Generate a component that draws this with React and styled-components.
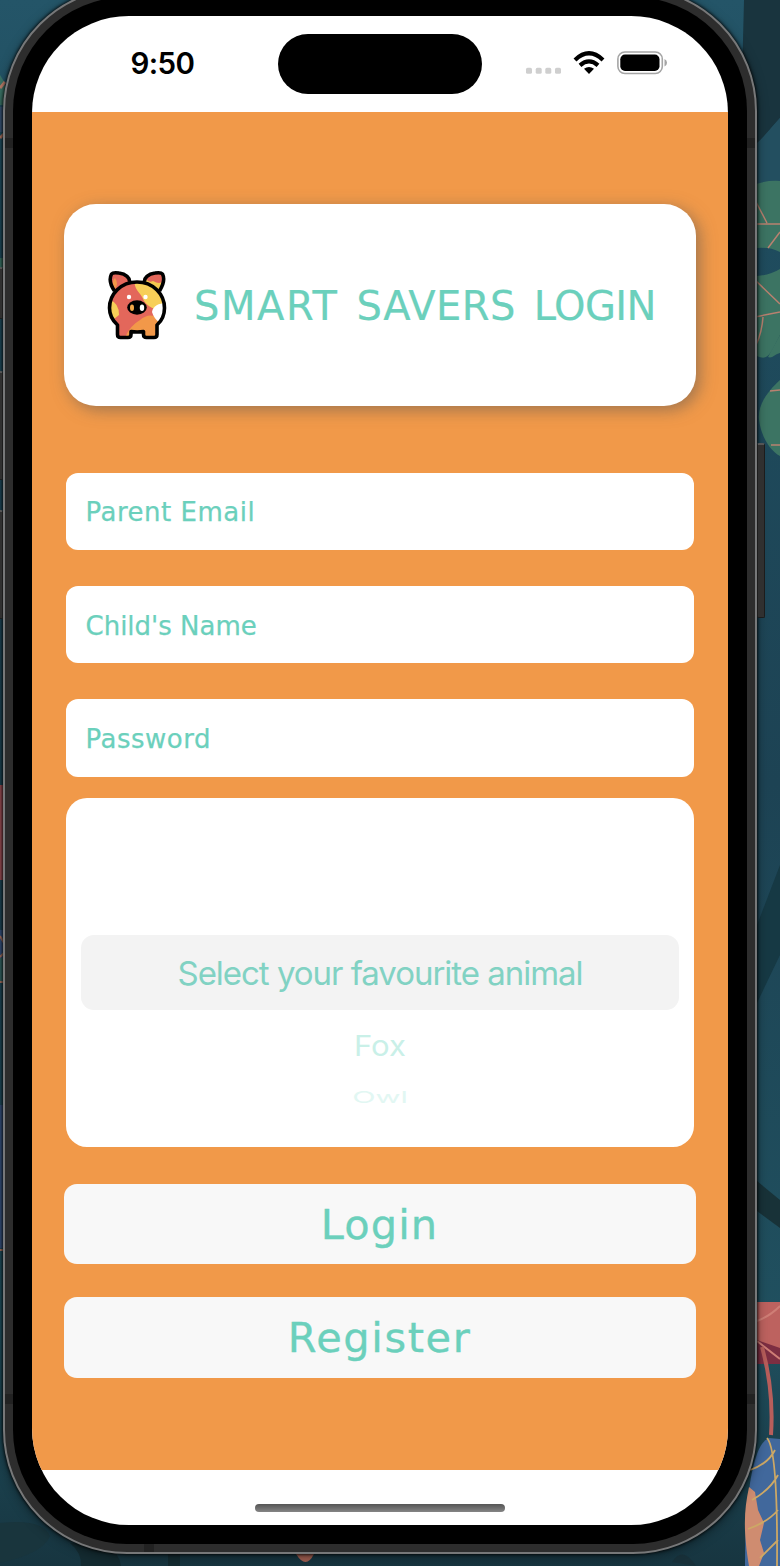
import React from 'react';
import styled, { createGlobalStyle } from 'styled-components';

const ORANGE = '#f19949';
const MINT = '#6bd0bc';

const GlobalStyle = createGlobalStyle`
  * { box-sizing: border-box; }
  html, body { margin: 0; padding: 0; overflow: hidden; background: #1d4555; }
`;

const Desktop = styled.main`
  position: relative;
  width: 780px;
  height: 1566px;
  overflow: hidden;
  display: flex;
  align-items: flex-start;
  background: #1f4757;
`;

const WallpaperArt = styled.svg`
  position: absolute;
  inset: 0;
`;

const Phone = styled.div`
  position: relative;
  flex: none;
  width: 754px;
  height: 1567px;
  margin: -13px 0 0 3px;
  padding: 8px;
  border: 2px solid #777879;
  border-radius: 124px;
  background: #2d2d2d;
  box-shadow: 0 0 3px 1px rgba(0, 0, 0, 0.75), 0 3px 12px rgba(0, 0, 0, 0.4);
`;

const AntennaBand = styled.span`
  position: absolute;
  ${({ $side }) => $side}: 0;
  top: ${({ $top }) => $top}px;
  width: 8px;
  height: 10px;
  background: #222;
`;

const BottomBand = styled.span`
  position: absolute;
  left: 139px;
  bottom: 0;
  width: 10px;
  height: 8px;
  background: #222;
`;

const SideButton = styled.span`
  position: absolute;
  ${({ $side }) => $side}: ${({ $side }) => ($side === 'right' ? -10 : -14)}px;
  top: ${({ $top }) => $top}px;
  width: ${({ $side }) => ($side === 'right' ? 8 : 12)}px;
  height: ${({ $height }) => $height}px;
  border: 1px solid #1c1c1c;
  border-top: 2px solid #555;
  border-radius: 2px;
  background: #303030;
`;

const Bezel = styled.div`
  height: 100%;
  padding: 19px;
  border-radius: 114px;
  background: #000;
`;

const Screen = styled.div`
  width: 696px;
  height: 1509px;
  border-radius: 97px;
  overflow: hidden;
  display: flex;
  flex-direction: column;
  background: #fff;
`;

const StatusBar = styled.header`
  height: 95.5px;
  flex: none;
  display: grid;
  grid-template-columns: 246px 204px 246px;
  align-items: start;
`;

const Time = styled.time`
  padding: 29px 0 0 98.5px;
  font: 600 29.5px/36px Inter, sans-serif;
  letter-spacing: -0.6px;
  color: #000;
`;

const Island = styled.div`
  height: 60px;
  margin-top: 18px;
  border-radius: 30px;
  background: #000;
`;

const StatusIcons = styled.svg`
  width: 150px;
  height: 30px;
  margin: 32px 0 0 36px;
`;

const LoginForm = styled.form`
  height: 1358.5px;
  flex: none;
  padding: 92.5px 32px 0;
  background: ${ORANGE};
  font-family: 'DejaVu Sans', sans-serif;
  color: ${MINT};
`;

const TitleCard = styled.div`
  height: 202px;
  padding-left: 42px;
  display: flex;
  align-items: center;
  border-radius: 32px;
  background: #fff;
  box-shadow: 4px 4px 16px rgba(85, 85, 85, 0.52);
`;

const PigIcon = styled.svg`
  width: 62px;
  height: 72px;
  flex: none;
`;

const Title = styled.h1`
  margin: 0 0 0 26px;
  padding-top: 2px;
  display: flex;
  gap: 18px;
  font-size: 40px;
  font-weight: 400;
  line-height: 48px;
  white-space: nowrap;
  -webkit-text-stroke: 0.2px ${MINT};
`;

const Word = styled.span`
  letter-spacing: ${({ $spacing }) => $spacing}px;
`;

const Fields = styled.div`
  padding: 66.5px 2px 0;
  display: flex;
  flex-direction: column;
  gap: 36px;
`;

const Field = styled.input`
  width: 100%;
  height: 77.4px;
  padding: 2px 18px 0 19.5px;
  border: 0;
  border-radius: 12px;
  background: #fff;
  font: 26px 'DejaVu Sans', sans-serif;
  letter-spacing: ${({ $spacing }) => $spacing}px;
  color: ${MINT};
  -webkit-text-stroke: 0.25px ${MINT};
  &::placeholder { color: ${MINT}; opacity: 1; }
`;

const Picker = styled.div`
  height: 349.5px;
  margin: 21px 2px 0;
  padding: 137px 15px 0;
  border-radius: 21px;
  background: #fff;
  display: flex;
  flex-direction: column;
  align-items: stretch;
  font-family: Inter, sans-serif;
  text-align: center;
`;

const SelectedOption = styled.div`
  height: 75.5px;
  border-radius: 13px;
  background: #f3f3f3;
  font-size: 33px;
  line-height: 77px;
  letter-spacing: -1.03px;
  color: #81d2c3;
  white-space: nowrap;
`;

const Option = styled.div`
  height: ${({ $height }) => $height}px;
  font-size: ${({ $size }) => $size}px;
  line-height: ${({ $height }) => $height}px;
  transform: scaleY(${({ $squash }) => $squash});
  color: ${({ $tone }) => $tone};
`;

const Actions = styled.div`
  margin-top: 36.5px;
  display: flex;
  flex-direction: column;
  gap: 33px;
`;

const ActionButton = styled.button`
  height: 80.5px;
  padding: 2px 1px 0 0;
  border: 0;
  border-radius: 13px;
  background: #f8f8f8;
  font: 41.5px/78px 'DejaVu Sans', sans-serif;
  letter-spacing: ${({ $spacing }) => $spacing}px;
  -webkit-text-stroke: 0.35px ${MINT};
  color: ${MINT};
`;

const HomeArea = styled.footer`
  flex: 1;
  display: flex;
  justify-content: center;
  padding-top: 33.5px;
`;

const HomeIndicator = styled.div`
  width: 250px;
  height: 8px;
  border-radius: 4px;
  background: linear-gradient(#555, #858585);
`;

function Wallpaper() {
  return (
    <WallpaperArt width="780" height="1566" viewBox="0 0 780 1566" aria-hidden="true">
      <defs>
        <linearGradient id="sea" x1="0" y1="0" x2="0" y2="1">
          <stop offset="0" stopColor="#245568" />
          <stop offset="0.15" stopColor="#1f4c5e" />
          <stop offset="0.5" stopColor="#1d4354" />
          <stop offset="0.85" stopColor="#20505f" />
          <stop offset="1" stopColor="#173540" />
        </linearGradient>
      </defs>
      <rect width="780" height="1566" fill="url(#sea)" />
      <path d="M744 0H780V118L757 145L742 80Z" fill="#19343e" />
      <path d="M780 118C774 124 765 136 757 143V186L780 181Z" fill="#234f60" />
      <path d="M750 186Q765 180 780 181V252Q770 247 757 248Z" fill="#3c7463" />
      <path d="M757 276Q770 275 780 269V335C770 355 768 361 757 356Z" fill="#3c7463" />
      <path d="M780 335V353C775 354 772 359 768 357Z" fill="#3c7463" />
      <path d="M780 380C770 389 757 404 759 420S770 451 780 456Z" fill="#3c7463" />
      <path d="M755 200L767 223M755 224L780 224M768 248L780 232M755 280L780 304M755 317L780 312M763 317Q762 332 756 345M770 391L780 390M771 445L780 445" stroke="#b98170" strokeWidth="1.500" fill="none" />
      <path d="M780 865L757 925V1003L780 955Z" fill="#163944" />
      <path d="M757 1181L780 1200V1228L757 1211Z" fill="#183238" />
      <path d="M757 1302H780V1348H757Z" fill="#bd625f" />
      <path d="M757 1340L780 1348V1364H757Z" fill="#7d2e42" />
      <path d="M757 1321Q770 1316 780 1306M757 1341L780 1359" stroke="#cf7e76" strokeWidth="2" fill="none" />
      <path d="M762 1347Q774 1390 771 1435" stroke="#b85e5b" strokeWidth="4" fill="none" />
      <path d="M745 1566C745 1500 752 1444 769 1438L780 1439V1566Z" fill="#41689c" />
      <path d="M749 1487L755 1492L758 1510L764 1523L760 1540L764 1553L759 1566H749C743 1530 744 1510 749 1487Z" fill="#cf8c70" />
      <path d="M767 1438Q778 1450 777 1566M775 1450Q768 1464 750 1470M778 1475Q770 1490 752 1500M778 1510Q768 1522 748 1529M778 1540L760 1558" stroke="#cda865" strokeWidth="1.800" fill="none" />
      <path d="M0 1523Q42 1518 50 1536Q44 1553 0 1563Z" fill="#19353d" />
      <path d="M70 1543Q82 1553 81 1566H121Q119 1552 107 1546ZM168 1550H180V1566H168Z" fill="#142b31" />
      <path d="M296 1554H314Q306 1570 296 1554Z" fill="#a26052" />
      <path d="M672 1562Q683 1545 696 1566Z" fill="#183039" />
      <path d="M0 75L5 83V105H0ZM0 258H4V269H0Z" fill="#3a7265" />
      <path d="M0 88L5 82M0 115L4 118M0 138L4 134" stroke="#ba7c68" strokeWidth="3" />
      <path d="M0 107H4V132H0Z" fill="#395678" />
      <path d="M0 785H4V880H0Z" fill="#994e55" />
      <path d="M0 930H4V963H0ZM0 1105H3V1248H0Z" fill="#36517c" />
      <path d="M0 958H3V982H0Z" fill="#346363" />
      <path d="M0 936L4 943M0 957L4 953M0 982H4M0 1250H4" stroke="#aa7564" strokeWidth="2" />
    </WallpaperArt>
  );
}

function PiggyBank() {
  return (
    <PigIcon viewBox="0 0 62 72" aria-label="Piggy bank">
      <defs>
        <clipPath id="body"><path d="M31 13C15 13 4 25 4 40C4 49 8 55 12 58V65Q12 68 15 68H22Q25 68 25 65V62H38V65Q38 68 41 68H48Q51 68 51 65V57C56 53 59 48 59 40C59 25 47 13 31 13Z" /></clipPath>
      </defs>
      <path d="M8 22C4 15 4 8 5.500 5Q8 3 13 4C20 5 24 9 24 14Z" fill="#e3675b" />
      <path d="M9 20Q13 15 9 9Q6 11 7 18Z" fill="#f29849" />
      <path d="M54 22C58 15 58 8 56.500 5Q54 3 49 4C42 5 38 9 38 14Z" fill="#f5c94f" />
      <path d="M42 7Q51 2 57 5V12Q54 16 47 12Q43 14 40 10Z" fill="#e3675b" />
      <g clipPath="url(#body)">
        <path d="M0 0H62V72H0Z" fill="#e3675b" />
        <path d="M29 12C27 20 36 25 38 32C42 38 48 40 55 42L62 37V10Z" fill="#f7cf58" />
        <path d="M4 31Q13 34 13 46L8 50L3 49Z" fill="#f7cf58" />
        <path d="M34 51Q41 45 48 47L58 54V72H18Q22 58 34 51Z" fill="#f29849" />
        <path d="M61 34C55 34 47 36 46 43Q48 50 54 54L62 50Z" fill="#fff" />
      </g>
      <g fill="none" stroke="#000" strokeWidth="3.600" strokeLinejoin="round">
        <path d="M31 13C15 13 3.500 25 3.500 39C3.500 47 7 52 11.500 56V65.500Q11.500 68.500 14.500 68.500H22Q25 68.500 25 65.500V62.500Q31 63.500 37.500 62.500V65.500Q37.500 68.500 40.500 68.500H48Q51 68.500 51 65.500V56C55.500 52 58.500 47 58.500 39C58.500 25 47 13 31 13Z" />
        <path d="M8.500 22C3 14 4 8 5.500 5Q7 3 13 4C20 5 24 9 23.500 13M53.500 22C58.500 14 58 8 56.500 5Q55 3 49 4C42 5 38 9 38.500 13" />
      </g>
      <circle cx="23" cy="28" r="2.200" fill="#fff" />
      <circle cx="39.500" cy="28" r="2.200" fill="#fff" />
      <ellipse cx="31" cy="38.500" rx="9.800" ry="7.200" fill="#000" />
      <ellipse cx="26" cy="38.800" rx="2" ry="3.200" fill="#f3a949" />
      <ellipse cx="36" cy="38.800" rx="2.200" ry="3.200" fill="#fff" />
    </PigIcon>
  );
}

function Indicators() {
  return (
    <StatusIcons viewBox="0 0 150 30" aria-hidden="true">
      <g fill="#cfcfcf">
        {[8, 17.7, 27.3, 37].map((x) => <rect key={x} x={x} y="19.800" width="6" height="6" rx="1.600" />)}
      </g>
      <g fill="none" stroke="#000" strokeWidth="4.200">
        <path d="M57 11.900Q71 -1.400 85 11.900" />
        <path d="M62 17.300Q71 9.500 80 17.300" />
      </g>
      <path d="M66 20.800Q71 17 76 20.800L71 26Z" fill="#000" />
      <rect x="99.900" y="4" width="44.400" height="21.500" rx="7" fill="none" stroke="#a5a5a5" strokeWidth="1.600" />
      <rect x="102.300" y="6.600" width="39.200" height="16.300" rx="4.700" fill="#000" />
      <path d="M146.500 11Q149 12 149 14.800T146.500 18.500Z" fill="#a5a5a5" />
    </StatusIcons>
  );
}

export default function App() {
  return (
    <>
      <GlobalStyle />
      <Desktop>
        <Wallpaper />
        <Phone>
          <SideButton $side="left" $top={278} $height={52} />
          <SideButton $side="left" $top={382} $height={109} />
          <SideButton $side="left" $top={521} $height={109} />
          <SideButton $side="right" $top={454} $height={175} />
          <AntennaBand $side="left" $top={149} />
          <AntennaBand $side="right" $top={149} />
          <AntennaBand $side="left" $top={1405} />
          <AntennaBand $side="right" $top={1405} />
          <BottomBand />
          <Bezel>
            <Screen>
              <StatusBar>
                <Time>9:50</Time>
                <Island />
                <Indicators />
              </StatusBar>
              <LoginForm>
                <TitleCard>
                  <PiggyBank />
                  <Title>
                    <Word $spacing={1.6}>SMART</Word>
                    <Word $spacing={0.4}>SAVERS</Word>
                    <Word $spacing={-0.6}>LOGIN</Word>
                  </Title>
                </TitleCard>
                <Fields>
                  <Field placeholder="Parent Email" $spacing={0.5} />
                  <Field placeholder="Child's Name" $spacing={0} />
                  <Field placeholder="Password" $spacing={0.5} />
                </Fields>
                <Picker>
                  <SelectedOption>Select your favourite animal</SelectedOption>
                  <Option $height={71} $size={31} $squash={0.91} $tone="#c9f0e8">Fox</Option>
                  <Option $height={32} $size={30.5} $squash={0.54} $tone="#e2f7f3">Owl</Option>
                </Picker>
                <Actions>
                  <ActionButton type="button" $spacing={1.1}>Login</ActionButton>
                  <ActionButton type="button" $spacing={1.6}>Register</ActionButton>
                </Actions>
              </LoginForm>
              <HomeArea>
                <HomeIndicator />
              </HomeArea>
            </Screen>
          </Bezel>
        </Phone>
      </Desktop>
    </>
  );
}
